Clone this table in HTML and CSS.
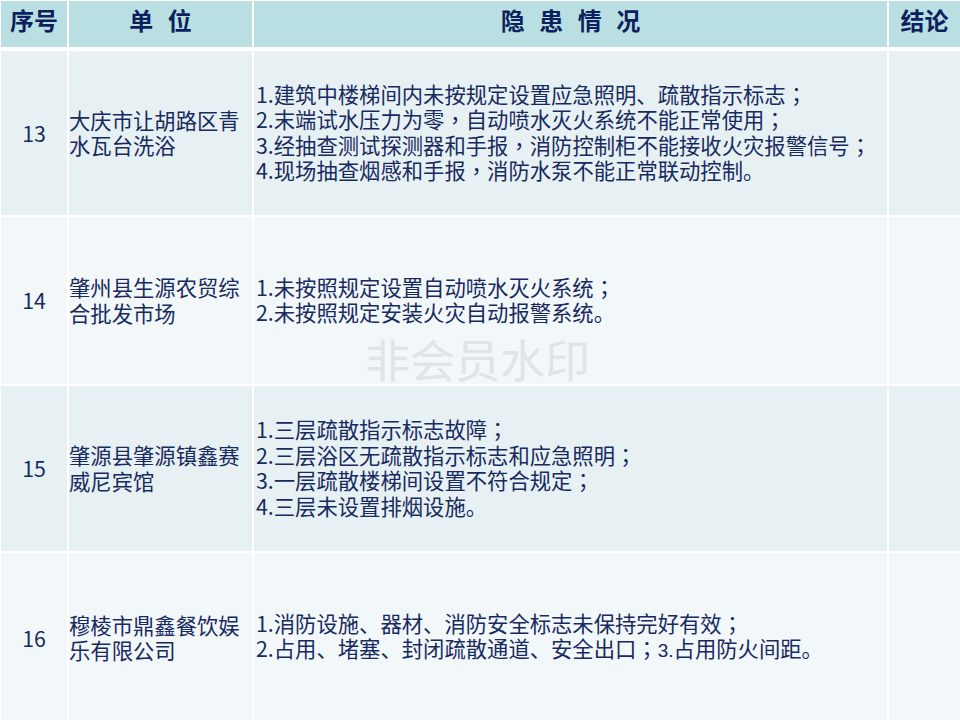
FILE: index.html
```html
<!DOCTYPE html>
<html lang="zh-CN">
<head>
<meta charset="utf-8">
<title>隐患情况</title>
<link rel="stylesheet" href="styles.css">
</head>
<body>
<div class="page">
  <div class="table">
    <div class="th">序号</div>
    <div class="th"><span class="spaced">单位</span></div>
    <div class="th"><span class="spaced">隐患情况</span></div>
    <div class="th">结论</div>

    <div class="td num odd">13</div>
    <div class="td unit odd"><div>大庆市让胡路区青水瓦台洗浴</div></div>
    <div class="td desc odd"><div>1.建筑中楼梯间内未按规定设置应急照明、疏散指示标志<span class="p" lang="zh-TW">；</span><br>2.末端试水压力为零<span class="p" lang="zh-TW">，</span>自动喷水灭火系统不能正常使用<span class="p" lang="zh-TW">；</span><br>3.经抽查测试探测器和手报<span class="p" lang="zh-TW">，</span>消防控制柜不能接收火灾报警信号<span class="p" lang="zh-TW">；</span><br>4.现场抽查烟感和手报<span class="p" lang="zh-TW">，</span>消防水泵不能正常联动控制。</div></div>
    <div class="td odd"></div>

    <div class="td num even">14</div>
    <div class="td unit even"><div>肇州县生源农贸综合批发市场</div></div>
    <div class="td desc even"><div>1.未按照规定设置自动喷水灭火系统<span class="p" lang="zh-TW">；</span><br>2.未按照规定安装火灾自动报警系统。</div></div>
    <div class="td even"></div>

    <div class="td num odd">15</div>
    <div class="td unit odd"><div>肇源县肇源镇鑫赛威尼宾馆</div></div>
    <div class="td desc odd"><div>1.三层疏散指示标志故障<span class="p" lang="zh-TW">；</span><br>2.三层浴区无疏散指示标志和应急照明<span class="p" lang="zh-TW">；</span><br>3.一层疏散楼梯间设置不符合规定<span class="p" lang="zh-TW">；</span><br>4.三层未设置排烟设施。</div></div>
    <div class="td odd"></div>

    <div class="td num even">16</div>
    <div class="td unit even"><div>穆棱市鼎鑫餐饮娱乐有限公司</div></div>
    <div class="td desc even"><div>1.消防设施、器材、消防安全标志未保持完好有效<span class="p" lang="zh-TW">；</span><br>2.占用、堵塞、封闭疏散通道、安全出口<span class="p" lang="zh-TW">；</span><span class="alt">3.</span>占用防火间距。</div></div>
    <div class="td even"></div>
  </div>
  <div class="watermark">非会员水印</div>
</div>
</body>
</html>
```

FILE: styles.css
```css
html, body {
  margin: 0;
  padding: 0;
  background: #ffffff;
}

body {
  font-family: "Noto Sans CJK SC", "Microsoft YaHei", sans-serif;
  width: 960px;
  height: 720px;
  overflow: hidden;
}

.page {
  position: relative;
  width: 960px;
  height: 720px;
}

.table {
  display: grid;
  grid-template-columns: 66px 183px 633px 71px;
  grid-template-rows: 48px 164px 167px 165px 170px;
  column-gap: 2px;
  row-gap: 2px;
  padding: 1px 0 0 1px;
  background: #ffffff;
}

.th {
  background: #badfe2;
  color: #0c1f5e;
  font-size: 24px;
  font-weight: 700;
  line-height: 38px;
  height: 46px;
  text-align: center;
  white-space: nowrap;
}

.spaced {
  letter-spacing: 14.5px;
  margin-right: -14.5px;
}

.td {
  display: flex;
  align-items: center;
  color: #182a60;
  font-size: 21.33px;
  line-height: 25.5px;
}

.odd {
  background: #e7f1f3;
}

.even {
  background: #f2f7f9;
}

.num {
  justify-content: center;
  padding-bottom: 1px;
}

.unit {
  padding-bottom: 2px;
}

.desc {
  padding-left: 2px;
  padding-bottom: 3px;
}

.p {
  font-family: "Noto Sans CJK TC", "Noto Sans CJK SC", sans-serif;
}

.alt {
  font-family: "Liberation Sans", sans-serif;
  font-size: 19px;
}

.watermark {
  position: absolute;
  left: 365px;
  top: 334px;
  font-size: 45px;
  line-height: 50px;
  color: #e1e3e4;
  white-space: nowrap;
  pointer-events: none;
}
```
